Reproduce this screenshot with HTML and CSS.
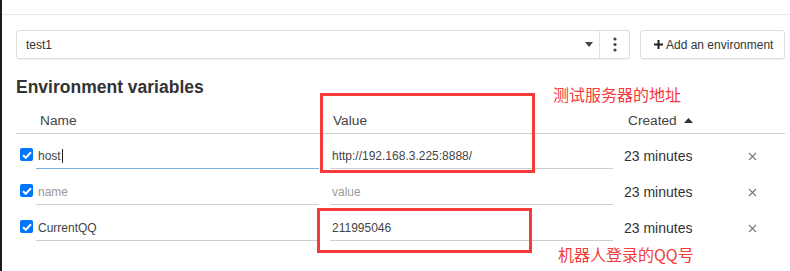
FILE: index.html
```html
<!DOCTYPE html>
<html>
<head>
<meta charset="utf-8">
<link rel="stylesheet" href="styles.css">
</head>
<body>
<div class="app">
  <div class="topbar"></div>
  <div class="content">
    <div class="env-row">
      <div class="env-select">
        <span class="env-name">test1</span>
        <span class="caret"><svg width="8" height="5" viewBox="0 0 8 5"><path d="M0 0H8L4 5Z" fill="#444"/></svg></span>
        <span class="kebab"><svg width="4" height="15" viewBox="0 0 4 15"><circle cx="2" cy="2" r="1.6" fill="#444"/><circle cx="2" cy="7.5" r="1.6" fill="#444"/><circle cx="2" cy="13" r="1.6" fill="#444"/></svg></span>
      </div>
      <button class="add-btn"><svg width="9" height="9" viewBox="0 0 9 9"><path d="M3.5 0H5.5V3.5H9V5.5H5.5V9H3.5V5.5H0V3.5H3.5Z" fill="#222"/></svg><span>Add an environment</span></button>
    </div>
    <h2 class="title">Environment variables</h2>
    <div class="table">
      <div class="thead">
        <div></div>
        <div class="th th-name">Name</div>
        <div class="th th-value">Value</div>
        <div class="th th-created">Created <svg width="9" height="5" viewBox="0 0 9 5"><path d="M0 5L4.5 0L9 5Z" fill="#333"/></svg></div>
        <div></div>
      </div>
      <div class="row">
        <div class="cell-check"><span class="cb"><svg width="10" height="8" viewBox="0 0 10 8"><path d="M1 4.2L3.8 6.8L9 1.2" stroke="#fff" stroke-width="2" fill="none"/></svg></span></div>
        <div class="cell-name"><div class="inp focus">host<span class="cursor"></span></div></div>
        <div class="cell-value"><div class="inp">http://192.168.3.225:8888/</div></div>
        <div class="cell-created">23 minutes</div>
        <div class="cell-del"><svg width="9" height="9" viewBox="0 0 9 9"><path d="M1 1L8 8M8 1L1 8" stroke="#777" stroke-width="1.1"/></svg></div>
      </div>
      <div class="row">
        <div class="cell-check"><span class="cb"><svg width="10" height="8" viewBox="0 0 10 8"><path d="M1 4.2L3.8 6.8L9 1.2" stroke="#fff" stroke-width="2" fill="none"/></svg></span></div>
        <div class="cell-name"><div class="inp ph">name</div></div>
        <div class="cell-value"><div class="inp ph">value</div></div>
        <div class="cell-created">23 minutes</div>
        <div class="cell-del"><svg width="9" height="9" viewBox="0 0 9 9"><path d="M1 1L8 8M8 1L1 8" stroke="#777" stroke-width="1.1"/></svg></div>
      </div>
      <div class="row">
        <div class="cell-check"><span class="cb"><svg width="10" height="8" viewBox="0 0 10 8"><path d="M1 4.2L3.8 6.8L9 1.2" stroke="#fff" stroke-width="2" fill="none"/></svg></span></div>
        <div class="cell-name"><div class="inp">CurrentQQ</div></div>
        <div class="cell-value"><div class="inp">211995046</div></div>
        <div class="cell-created">23 minutes</div>
        <div class="cell-del"><svg width="9" height="9" viewBox="0 0 9 9"><path d="M1 1L8 8M8 1L1 8" stroke="#777" stroke-width="1.1"/></svg></div>
      </div>
    </div>
  </div>
  <div class="mark mark-1"></div>
  <div class="mark mark-2"></div>
  <div class="note note-1">测试服务器的地址</div>
  <div class="note note-2">机器人登录的QQ号</div>
</div>
</body>
</html>
```
FILE: styles.css
```css
* { box-sizing: border-box; }
html, body { margin: 0; padding: 0; background: #fff; }
body {
  font-family: "Liberation Sans", Arial, sans-serif;
  color: #333;
  width: 790px;
  height: 271px;
  overflow: hidden;
}
.app {
  position: relative;
  height: 271px;
  border-left: 2px solid #1c1c1c;
}
.topbar {
  height: 15px;
  border-bottom: 1px solid #e8e8e8;
}
.content {
  padding: 15px 5px 0 14px;
}
.env-row {
  display: flex;
  gap: 10px;
  height: 29px;
}
.env-select {
  width: 614px;
  height: 29px;
  border: 1px solid #dcdcdc;
  border-radius: 3px;
  box-shadow: 0 1px 1px rgba(0,0,0,0.05);
  display: flex;
  align-items: center;
}
.env-name {
  flex: 1;
  padding-left: 9px;
  font-size: 12px;
  color: #333;
}
.caret {
  display: flex;
  width: 10px;
  margin-right: 4px;
}
.kebab {
  display: flex;
  align-items: center;
  justify-content: center;
  width: 30px;
  height: 100%;
  border-left: 1px solid #e2e2e2;
}
.add-btn {
  width: 145px;
  height: 29px;
  border: 1px solid #dcdcdc;
  border-radius: 3px;
  background: #fff;
  box-shadow: 0 1px 1px rgba(0,0,0,0.05);
  display: flex;
  align-items: center;
  padding: 0 0 0 13px;
  gap: 3px;
  font-family: "Liberation Sans", Arial, sans-serif;
  font-size: 12px;
  color: #333;
}
.title {
  margin: 18px 0 0 0;
  font-size: 17.5px;
  line-height: 20px;
  font-weight: bold;
  color: #333;
}
.table {
  margin-top: 10px;
}
.thead, .row {
  display: grid;
  grid-template-columns: 20px 294px 294px 120px 41px;
}
.thead {
  height: 27px;
  border-bottom: 1px solid #cfcfcf;
  align-items: center;
  font-size: 13.7px;
  color: #444;
}
.th-name { padding-left: 4px; }
.th-value { padding-left: 3px; }
.th-created {
  padding-left: 4px;
  display: flex;
  align-items: center;
  gap: 7px;
}
.row {
  height: 36px;
  padding-top: 10px;
  align-items: start;
}
.cell-check {
  padding: 4px 0 0 4px;
  display: flex;
}
.cb {
  width: 13px;
  height: 13px;
  border-radius: 2px;
  background: #0075ff;
  display: flex;
  align-items: center;
  justify-content: center;
}
.inp {
  width: 283px;
  height: 25px;
  border-bottom: 1px solid #cfcfcf;
  font-size: 12px;
  line-height: 24px;
  padding-left: 2px;
  color: #444;
  display: flex;
  align-items: center;
}
.inp.focus { border-bottom-color: #7cb1e4; }
.inp.ph { color: #9a9a9a; }
.cursor {
  display: inline-block;
  width: 1px;
  height: 14px;
  background: #222;
  margin-left: 1px;
}
.cell-created {
  font-size: 14px;
  line-height: 24px;
  color: #333;
}
.cell-del {
  display: flex;
  align-items: center;
  height: 24px;
  padding-left: 4px;
}
.mark {
  position: absolute;
  border: 3px solid #f53a3a;
}
.mark-1 { left: 318px; top: 93px; width: 215px; height: 80px; }
.mark-2 { left: 315px; top: 208px; width: 215px; height: 45px; }
.note {
  position: absolute;
  font-family: "Noto Sans CJK SC", "Liberation Sans", sans-serif;
  font-size: 16px;
  line-height: 20px;
  color: #f53a3a;
}
.note-1 { left: 551px; top: 84px; }
.note-2 { left: 556px; top: 244px; }
```
